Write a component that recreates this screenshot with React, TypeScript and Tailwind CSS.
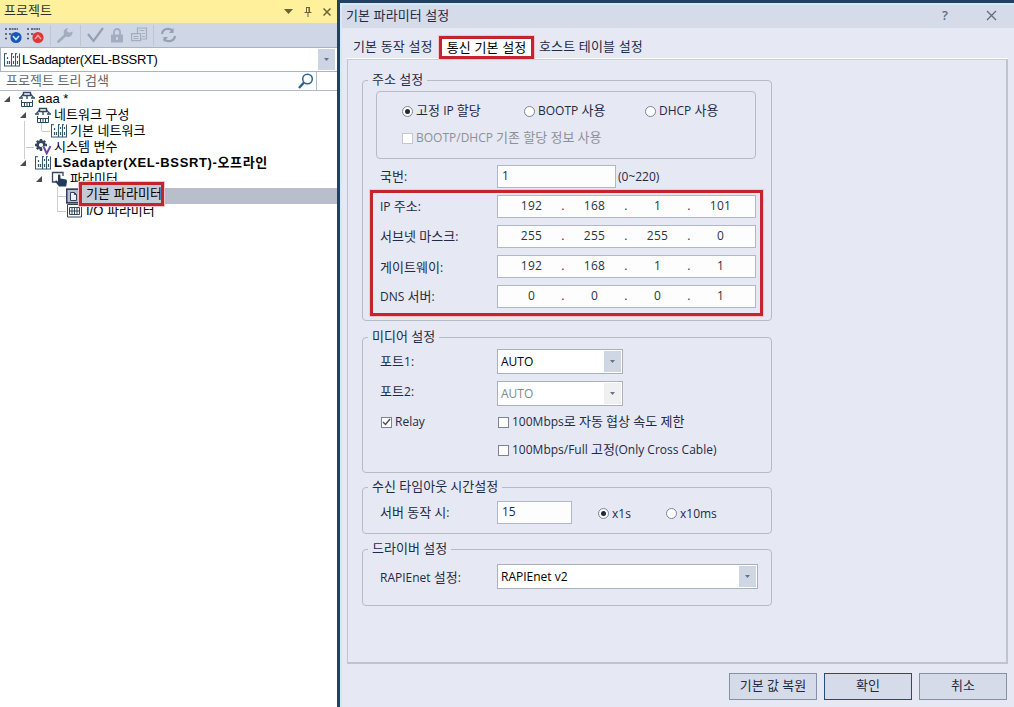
import { useState } from "react";

const RED_BOX = "pointer-events-none absolute border-[3px] border-[#c4252c] outline outline-[#f7c3ca]";

// Hangul glyphs are set a little larger than the latin text around them
function Ko({ children }: { children: string }) {
  return (
    <>
      {children.split(/([\u3131-\ud7a3]+)/).map((part, i) =>
        i % 2 ? (
          <span key={i} className="text-[13px] leading-none tracking-[0.05px]">{part}</span>
        ) : (
          part
        )
      )}
    </>
  );
}

function NetworkIcon() {
  return (
    <svg width="16" height="16" viewBox="0 0 16 16" fill="none" stroke="#2d4a5c">
      <path d="M4.500 1.500h7v3h-7zM8 4.500V8" strokeWidth="1.400" />
      <path d="M4.500 3L1.500 6.500M11.500 3l3 3.500" strokeWidth="1.200" />
      <path d="M0 7h4M12 7h4" strokeWidth="1.600" />
      <path d="M2.500 9v6.500h11V9M2.500 11.500h11M5.500 11v4M8 11v4M10.500 11v4" />
    </svg>
  );
}

function ModuleIcon() {
  return (
    <svg width="16" height="14" viewBox="0 0 16 14" fill="none" stroke="#34566a">
      <path d="M.5 .5v12.500M0 13h16M7.500 .5v12.500M11.500 .5v12.500M15.500 .5v12.500" />
      <path d="M0 .7h3M7 .7h2M11 .7h2" />
      <path d="M3.500 4v2M3.500 8v3M5.500 8v3M9.500 3v2M9.500 8v3M13.500 3v2M13.500 8v3" strokeWidth="1.200" />
    </svg>
  );
}

function VariableIcon() {
  return (
    <svg width="17" height="16" viewBox="0 0 17 16" fill="none">
      <circle cx="6" cy="6" r="3.400" stroke="#34465c" strokeWidth="2.600" />
      <path d="M6 0v2M6 10v2M0 6h2M1.800 1.800l1.400 1.400M10.200 1.800L8.800 3.200M1.800 10.200l1.400-1.400M10 6h2" stroke="#34465c" strokeWidth="2.400" />
      <path d="M8.500 7.500l3.200 7L15.500 7" stroke="#fff" strokeWidth="4" />
      <path d="M8.500 7.500l3.200 7L15.500 7" stroke="#6b4a9c" strokeWidth="1.900" />
    </svg>
  );
}

function HandIcon() {
  return (
    <svg width="17" height="16" viewBox="0 0 17 16">
      <path d="M12 5V1.500H1.500V11H5" fill="none" stroke="#34465c" strokeWidth="1.300" />
      <path d="M7 4.500c0-1.300 2.400-1.300 2.400 0v3l4.600.8c1.500.3 2.200 1 2 2.200l-.8 5H8L4.500 11c-.7-1 .6-1.900 1.400-1.200L7 10.800z" fill="#243c5c" />
    </svg>
  );
}

function PageIcon() {
  return (
    <svg width="16" height="16" viewBox="0 0 16 16" fill="none" stroke="#33415f">
      <rect x=".75" y="1.250" width="14" height="13.500" strokeWidth="1.500" />
      <path d="M4.500 4.500h4l2 2v6h-6zM8.500 4.500v2h2" fill="#eef0f6" />
    </svg>
  );
}

function IoIcon() {
  return (
    <svg width="16" height="14" viewBox="0 0 16 14" fill="none" stroke="#34465c">
      <path d="M.5 .5h14v12.500H.5zM2.500 3.500h10v7h-10z" />
      <path d="M5 3v8M7.500 3v8M10 3v8M2.500 7h10" />
    </svg>
  );
}

function ListIcon({ color, up }: any) {
  return (
    <svg width="17" height="17" viewBox="0 0 17 17" fill="none">
      <path d="M0 2h2M0 7h2M0 11.500h2M4 2h9M4 7h3" stroke="#3e4c66" strokeWidth="1.700" strokeDasharray="2 .6" />
      <circle cx="11" cy="10.500" r="5.600" fill={color} />
      {up ? (
        <path d="M8 12l3-3.500 3 3.500" stroke="#f7a7a0" strokeWidth="1.500" />
      ) : (
        <path d="M8 9l3 3.500L14 9" stroke="#d6e6ff" strokeWidth="1.500" />
      )}
    </svg>
  );
}

function Caret({ className = "text-[#67718a]" }: any) {
  return (
    <svg width="5" height="3" viewBox="0 0 5 3" className={className}>
      <path d="M0 0h5L2.500 3z" fill="currentColor" />
    </svg>
  );
}

function Separator() {
  return <div className="h-[21px] w-px bg-[#bdc5d8]" />;
}

function Toolbar() {
  return (
    <div className="flex h-6 items-center bg-[#cfd6e5] pl-[5px]">
      <ListIcon color="#1857b8" />
      <div className="w-[5px]" />
      <ListIcon color="#e03437" up />
      <div className="w-[6px]" />
      <Separator />
      <svg className="ml-[6px]" width="17" height="16" viewBox="0 0 17 16">
        <path d="M1.500 14.500L9 7.500" stroke="#a2adbf" strokeWidth="2.800" strokeLinecap="round" />
        <path d="M15.500 4.500A4.500 4.500 0 1 1 11 1l-1.200 3 2.200 1.800z" fill="#a2adbf" />
      </svg>
      <div className="w-[6px]" />
      <Separator />
      <svg className="ml-[6px]" width="17" height="16" viewBox="0 0 17 16">
        <path d="M1 7l5.500 7L16 1" fill="none" stroke="#93a0b5" strokeWidth="2.200" />
      </svg>
      <svg className="ml-[7px]" width="12" height="15" viewBox="0 0 12 15">
        <path d="M3 7V4a3 3 0 0 1 6 0v3" fill="none" stroke="#a2adbf" strokeWidth="1.800" />
        <rect y="6.500" width="12" height="8" fill="#a2adbf" />
        <path d="M6 9v3" stroke="#d6dcea" strokeWidth="1.500" />
      </svg>
      <svg className="ml-2" width="17" height="16" viewBox="0 0 17 16" fill="none" stroke="#a2adbf" strokeWidth="1.200">
        <path d="M6.500 6V1h9v11H10" />
        <path d="M8.500 3.500h5M11 6.500h3M11 9.500h3" />
        <path d="M.6 6.600h9v7h-9zM2.500 9.500h5M2.500 11.500h5" />
      </svg>
      <div className="w-[5px]" />
      <Separator />
      <svg className="ml-[6px]" width="17" height="16" viewBox="0 0 17 16" fill="none" stroke="#94a1b3" strokeWidth="2.200">
        <path d="M2 7a6.200 5.800 0 0 1 11-3M15 9a6.200 5.800 0 0 1-11 3" />
        <path d="M13.500 1v5H9zM3.500 15v-5H8z" fill="#94a1b3" stroke="none" />
      </svg>
    </div>
  );
}

function TreeRow({ indent, open, branch, icon, children, text = "" }: any) {
  return (
    <div className={`flex h-4 items-center ${indent}`}>
      <div className="flex w-[15px] items-center">
        {open && (
          <svg width="6" height="6" viewBox="0 0 6 6">
            <path d="M6 0v6H0z" fill="#4c4c4c" />
          </svg>
        )}
        {branch && <div className="ml-auto mr-px h-px w-2 bg-[#c9c9c9]" />}
      </div>
      <div className="flex w-[17px] shrink-0 items-center">{icon}</div>
      <span className={`whitespace-pre pl-[2px] ${text}`}>{children}</span>
    </div>
  );
}

function ProjectPanel() {
  return (
    <aside className="flex w-[337px] shrink-0 flex-col bg-white font-['Liberation_Sans','Noto_Sans_CJK_KR',sans-serif] text-[13px] leading-4 text-black">
      <div className="flex h-[23px] items-center bg-[#fff19c] pb-px pl-[4px] pr-[6px] text-[#33312a]">
        <span className="text-[13px]">프로젝트</span>
        <div className="ml-auto mt-px flex items-center text-[#6c6233]">
          <svg width="9" height="5" viewBox="0 0 9 5">
            <path d="M0 0h9L4.500 5z" fill="currentColor" />
          </svg>
          <svg className="ml-[11px]" width="8" height="10" viewBox="0 0 8 10" fill="none" stroke="currentColor">
            <path d="M2 .5h4M2.500 .5v5M5.500 .5v5M.5 5.500h7M4 5.500V10" />
            <path d="M5 1v4" />
          </svg>
          <svg className="ml-[11px]" width="8" height="8" viewBox="0 0 8 8" stroke="currentColor" strokeWidth="1.500">
            <path d="M.5 .5l7 7M7.500 .5l-7 7" />
          </svg>
        </div>
      </div>
      <Toolbar />
      <div className="flex h-[25px] items-center border border-r-0 border-[#aab3c4] pl-[3px] pr-[2px]">
        <ModuleIcon />
        <span className="pl-[2px] tracking-[-0.25px]">LSadapter(XEL-BSSRT)</span>
        <div className="ml-auto flex h-[21px] w-[17px] items-center justify-center bg-[#cdd4e3]">
          <Caret />
        </div>
      </div>
      <div className="flex h-[19px] items-center border-b border-[#b3bac8] bg-[#fcfdfe]">
        <span className="pl-[6px] text-[#666]">프로젝트 트리 검색</span>
        <svg className="ml-auto" width="16" height="16" viewBox="0 0 16 16" fill="none" stroke="#2d618f">
          <circle cx="9.500" cy="6" r="4.800" strokeWidth="1.500" />
          <path d="M6 9.500L1 15" strokeWidth="2.400" />
        </svg>
        <div className="ml-[2px] h-full w-[21px] border-l border-[#b3bac8] bg-white" />
      </div>
      <div className="relative">
        <TreeRow indent="pl-[4px]" open icon={<NetworkIcon />}>{"aaa *"}</TreeRow>
        <TreeRow indent="pl-[20px]" open icon={<NetworkIcon />}>네트워크 구성</TreeRow>
        <TreeRow indent="pl-[36px]" branch icon={<ModuleIcon />}>기본 네트워크</TreeRow>
        <TreeRow indent="pl-[20px]" branch icon={<VariableIcon />}>시스템 변수</TreeRow>
        <TreeRow indent="pl-[20px]" open text="font-bold tracking-[0.63px]" icon={<ModuleIcon />}>LSadapter(XEL-BSSRT)-오프라인</TreeRow>
        <TreeRow indent="pl-[36px]" open icon={<HandIcon />}>파라미터</TreeRow>
        <div className="mt-px flex h-4 items-center pl-[58px]">
          <div className="h-px w-2 bg-[#c9c9c9]" />
          <div className="flex h-4 flex-1 items-center bg-[#b9bfca]">
            <PageIcon />
          </div>
        </div>
        <TreeRow indent="-mt-px pl-[52px]" branch icon={<IoIcon />}>I/O 파라미터</TreeRow>
        {/* connector lines between the nested rows */}
        <div className="absolute left-[24px] top-[30px] h-[38px] w-px bg-[#d0d0d0]" />
        <div className="absolute left-[41px] top-[32px] h-2 w-px bg-[#d0d0d0]" />
        <div className="absolute left-[57px] top-[96px] h-[25px] w-px bg-[#d0d0d0]" />
        <div className={`${RED_BOX} left-[79px] top-[91px] flex h-6 w-[85px] items-center bg-[#c5cad7] pl-[4px]`}>
          <span className="whitespace-nowrap tracking-[0.1px]">기본 파라미터</span>
        </div>
      </div>
    </aside>
  );
}

function Radio({ checked, onClick, children, className = "" }: any) {
  return (
    <button onClick={onClick} className={`flex items-center gap-[3px] whitespace-nowrap ${className}`}>
      <span className="flex h-[11px] w-[11px] items-center justify-center rounded-full border border-[#7d8393] bg-white">
        {checked && <span className="h-[5px] w-[5px] rounded-full bg-[#222a38]" />}
      </span>
      <span><Ko>{children}</Ko></span>
    </button>
  );
}

function Checkbox({ checked, disabled, onClick, children, className = "" }: any) {
  return (
    <button
      onClick={onClick}
      disabled={disabled}
      className={`flex h-4 items-center gap-[3px] whitespace-nowrap ${disabled ? "text-[#8d909a]" : ""} ${className}`}
    >
      <span
        className={`flex h-[11px] w-[11px] items-center justify-center border bg-white ${
          disabled ? "border-[#c3c6cf]" : "border-[#7d8393]"
        }`}
      >
        {checked && (
          <svg width="9" height="8" viewBox="0 0 9 8" fill="none" stroke="#4a5160" strokeWidth="1.400">
            <path d="M1 4l2.500 2.500L8 1" />
          </svg>
        )}
      </span>
      <span><Ko>{children}</Ko></span>
    </button>
  );
}

function Group({ title, className, children }: any) {
  return (
    <fieldset className={`w-[410px] rounded-[4px] border border-[#b6bbc9] ${className}`}>
      <legend className="ml-[5px] h-4 whitespace-nowrap px-1"><Ko>{title}</Ko></legend>
      {children}
    </fieldset>
  );
}

function Label({ children, className = "" }: any) {
  return <span className={`w-[117px] whitespace-nowrap ${className}`}><Ko>{children}</Ko></span>;
}

function IpField({ parts }: any) {
  return (
    <div className="flex h-[23px] w-[259px] items-center border border-[#b0b8c8] bg-[#fdfdfd] pb-px pl-[2px] tracking-[0.3px] text-[#2b3340]">
      {parts.map((part: number, i: number) => (
        <div key={i} className="flex w-[63px] items-center">
          <span className="w-[63px] shrink-0 text-center">{part}</span>
          {i < 3 && <span className="-ml-[2px] w-1 shrink-0 text-center">.</span>}
        </div>
      ))}
    </div>
  );
}

function Select({ value, disabled, className }: any) {
  return (
    <div
      className={`flex h-[25px] items-center border border-[#aab0bd] bg-white pl-[3px] pr-px ${
        disabled ? "text-[#85878c]" : "text-black"
      } ${className}`}
    >
      <span>{value}</span>
      <div className={`ml-auto flex h-[21px] w-[17px] items-center justify-center ${disabled ? "bg-[#f0f0f2]" : "bg-[#cfd6e4]"}`}>
        <Caret />
      </div>
    </div>
  );
}

const addresses = [
  { label: "IP 주소:", parts: [192, 168, 1, 101], pad: "" },
  { label: "서브넷 마스크:", parts: [255, 255, 255, 0], pad: "" },
  { label: "게이트웨이:", parts: [192, 168, 1, 1], pad: "pt-[3px]" },
  { label: "DNS 서버:", parts: [0, 0, 0, 1], pad: "" },
];

export default function App() {
  const [mode, setMode] = useState("fixed");
  const [relay, setRelay] = useState(true);
  const [unit, setUnit] = useState("1s");

  return (
    <div className="flex h-[707px] w-[1014px] overflow-hidden bg-[#22405f]">
      <ProjectPanel />
      <main className="ml-[3px] mt-[3px] flex flex-1 flex-col border-l-2 border-t-2 border-[#d3e8fb] bg-[#e6e9f3] font-['Open_Sans','Noto_Sans_CJK_KR',sans-serif] text-[12px] leading-4 text-[#1f2a44]">
        <div className="flex h-[23px] items-center bg-[#d5dbe9] pb-[3px] pl-[4px] pr-[17px]">
          <span className="text-[13px] tracking-[0.1px]">기본 파라미터 설정</span>
          <span className="ml-auto mr-[38px] text-[13px] font-semibold text-[#646b7b]">?</span>
          <svg width="11" height="11" viewBox="0 0 11 11" stroke="#646b7b" strokeWidth="1.300">
            <path d="M1 1l9 9M10 1l-9 9" />
          </svg>
        </div>
        <div className="flex h-[31px] pl-[11px] pt-[8px] text-[13px] tracking-[0.15px]">
          <div className="h-[23px] w-[86px] whitespace-nowrap pt-[2px]">기본 동작 설정</div>
          <div className="relative flex h-[23px] w-[95px] items-center justify-center whitespace-nowrap bg-white pb-[2px] text-black">
            통신 기본 설정
            <div className={`${RED_BOX} inset-0`} />
          </div>
          <div className="whitespace-nowrap pl-[5px] pt-[2px]">호스트 테이블 설정</div>
        </div>
        <div className="ml-[5px] h-[605px] w-[661px] border border-b-2 border-r-2 border-[#bfc4d3] border-t-[#c9cddb] pl-[14px] pt-[12px] shadow-[0_-1px_0_#fff]">
          <Group title="주소 설정" className="relative h-[249px]">
            <div className="ml-[13px] mt-[3px] h-[68px] w-[380px] rounded-[4px] border border-[#b6bbc9] pl-[25px] pt-[10px]">
              <div className="flex h-[18px] items-center">
                <Radio className="w-[122px]" checked={mode === "fixed"} onClick={() => setMode("fixed")}>고정 IP 할당</Radio>
                <Radio className="w-[121px]" checked={mode === "bootp"} onClick={() => setMode("bootp")}>BOOTP 사용</Radio>
                <Radio checked={mode === "dhcp"} onClick={() => setMode("dhcp")}>DHCP 사용</Radio>
              </div>
              <Checkbox disabled className="mt-[10px]">BOOTP/DHCP 기존 할당 정보 사용</Checkbox>
            </div>
            <div className="mt-[6px] flex h-[23px] items-center pl-[17px]">
              <Label>국번:</Label>
              <div className="h-[23px] w-[119px] border border-[#b0b8c8] bg-[#fdfdfd] pl-[4px] pt-[2px]">1</div>
              <span className="pl-[2px]">(0~220)</span>
            </div>
            <div className="mt-[7px] flex flex-col gap-[7px] pl-[17px]">
              {addresses.map((row) => (
                <div key={row.label} className="flex h-[23px] items-center">
                  <Label className={row.pad}>{row.label}</Label>
                  <IpField parts={row.parts} />
                </div>
              ))}
            </div>
            <div className={`${RED_BOX} left-[7px] top-[102px] h-[126px] w-[393px]`} />
          </Group>

          <Group title="미디어 설정" className="mt-[8px] h-[144px]">
            <div className="mt-[4px] flex h-[25px] items-center pl-[17px]">
              <Label>포트1:</Label>
              <Select value="AUTO" className="w-[126px]" />
            </div>
            <div className="mt-[7px] flex h-[25px] items-center pl-[17px]">
              <Label className="pb-1">포트2:</Label>
              <Select value="AUTO" disabled className="w-[126px]" />
            </div>
            <div className="mt-[8px] flex h-4 items-center pl-[18px]">
              <Checkbox checked={relay} onClick={() => setRelay(!relay)} className="w-[117px]">Relay</Checkbox>
              <Checkbox>100Mbps로 자동 협상 속도 제한</Checkbox>
            </div>
            <Checkbox className="ml-[135px] mt-3">100Mbps/Full 고정(Only Cross Cable)</Checkbox>
          </Group>

          <Group title="수신 타임아웃 시간설정" className="mt-[6px] h-[55px]">
            <div className="mt-[6px] flex h-[23px] items-center pl-[17px]">
              <Label>서버 동작 시:</Label>
              <div className="h-[23px] w-[75px] border border-[#b0b8c8] bg-[#fdfdfd] pl-[4px] pt-[2px]">15</div>
              <Radio className="ml-[26px] w-[68px] pt-[2px]" checked={unit === "1s"} onClick={() => setUnit("1s")}>x1s</Radio>
              <Radio className="pt-[2px]" checked={unit === "10ms"} onClick={() => setUnit("10ms")}>x10ms</Radio>
            </div>
          </Group>

          <Group title="드라이버 설정" className="mt-[7px] h-[65px]">
            <div className="mt-[7px] flex h-[25px] items-center pl-[17px]">
              <Label className="pt-[2px]">RAPIEnet 설정:</Label>
              <Select value="RAPIEnet v2" className="w-[261px]" />
            </div>
          </Group>
        </div>
        <div className="mt-[9px] flex justify-end gap-[7px] pr-[7px]">
          <button className="h-[27px] w-[88px] border border-[#8791a5] bg-[#d6dbe9] pb-[2px]"><Ko>기본 값 복원</Ko></button>
          <button className="h-[27px] w-[88px] border border-[#1f4f78] bg-[#d6dbe9] pb-[2px]"><Ko>확인</Ko></button>
          <button className="h-[27px] w-[88px] border border-[#8791a5] bg-[#d6dbe9] pb-[2px]"><Ko>취소</Ko></button>
        </div>
      </main>
    </div>
  );
}
